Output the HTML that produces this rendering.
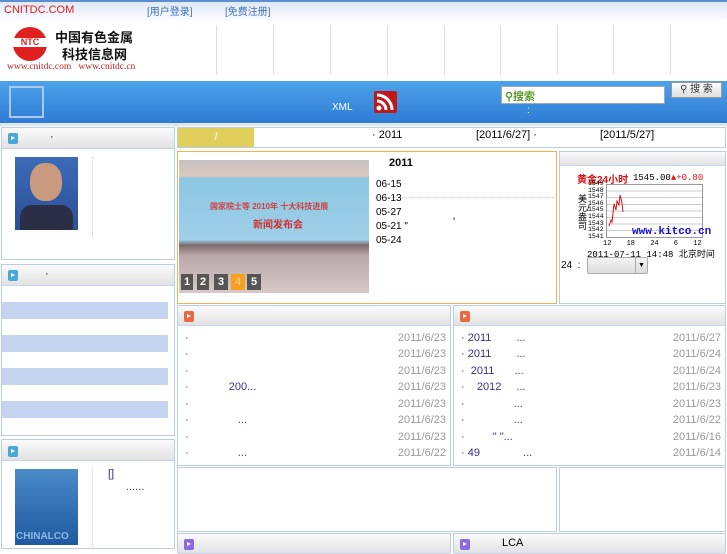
<!DOCTYPE html>
<html><head><meta charset="utf-8"><style>
*{margin:0;padding:0;box-sizing:border-box}
body{width:727px;height:545px;overflow:hidden;background:#fff;font-family:"Liberation Sans","Noto Sans CJK SC",sans-serif;font-size:11px;position:relative}
.a{position:absolute}
.hd{position:absolute;background:linear-gradient(#fafafa,#e2e2e2);border-bottom:1px solid #c8d6ea}
.bx{position:absolute;border:1px solid #b8cde6;background:#fff}
.ic{position:absolute;width:10px;height:11px;border-radius:2px}
.ic:after{content:"";position:absolute;left:3px;top:3px;border-left:4px solid #fff;border-top:2.5px solid transparent;border-bottom:2.5px solid transparent}
.row{position:absolute;left:0;right:0;height:16px;font-size:11px}
.row .d{position:absolute;right:4px;color:#999}
.row .t{position:absolute;left:7px;color:#33338a}
.vl{position:absolute;top:25px;width:1px;height:50px;background:#ddd}
</style></head><body>
<div class="a" style="left:0;top:0;width:727px;height:22px;background:linear-gradient(#dbe6f3,#fff)"></div>
<div class="a" style="left:0;top:0;width:727px;height:2px;background:#5b8fd0"></div>
<div class="a" style="left:4px;top:4px;color:#e02020;font-size:11px">CNITDC.COM</div>
<div class="a" style="left:147px;top:3px;color:#3a6fc4;font-size:10px">[用户登录]</div>
<div class="a" style="left:225px;top:3px;color:#3a6fc4;font-size:10px">[免费注册]</div>
<div class="a" style="left:13px;top:27px;width:34px;height:34px;border-radius:50%;background:#e02020"></div>
<div class="a" style="left:12px;top:38px;width:36px;height:9px;background:#fff;color:#e02020;font-size:9px;font-weight:bold;text-align:center;line-height:9px">NTC</div>
<div class="a" style="left:55px;top:27px;font-size:13px;font-weight:bold;color:#111">中国有色金属</div>
<div class="a" style="left:62px;top:44px;font-size:13px;font-weight:bold;color:#111">科技信息网</div>
<div class="a" style="left:7px;top:62px;font-size:9.5px;color:#c02020;font-family:'Liberation Serif',serif">www.cnitdc.com &nbsp;&nbsp;www.cnitdc.cn</div>
<div class="vl" style="left:216px"></div><div class="vl" style="left:273px"></div><div class="vl" style="left:330px"></div><div class="vl" style="left:387px"></div><div class="vl" style="left:444px"></div><div class="vl" style="left:500px"></div><div class="vl" style="left:557px"></div><div class="vl" style="left:613px"></div><div class="vl" style="left:670px"></div>
<div class="a" style="left:0;top:81px;width:727px;height:42px;background:linear-gradient(#4da3ea,#2e7bd4)"></div>
<div class="a" style="left:9px;top:86px;width:35px;height:32px;border:2px solid #a8c8ec"></div>
<div class="a" style="left:332px;top:102px;color:#fff;font-size:10px">XML</div>
<div class="a" style="left:374px;top:91px;width:23px;height:22px;background:#c01818;border-radius:2px;overflow:hidden">
<svg width="23" height="22"><circle cx="5" cy="17" r="2.5" fill="#fff"/><path d="M3 10a9 9 0 0 1 9 9M3 4a15 15 0 0 1 15 15" stroke="#fff" stroke-width="3" fill="none"/></svg></div>
<div class="a" style="left:501px;top:86px;width:164px;height:18px;background:#fff;border:1px solid #9ab"></div>
<div class="a" style="left:505px;top:88px;color:#5a9a2a;font-size:11px;font-weight:bold">⚲搜索</div>
<div class="a" style="left:527px;top:105px;color:#fff;font-size:10px">:</div>
<div class="a" style="left:671px;top:82px;width:51px;height:16px;background:linear-gradient(#fff,#ddd);border:1px solid #999;font-size:10px;text-align:center;line-height:14px;color:#333">⚲ 搜 索</div>
<div class="a" style="left:0;top:123px;width:727px;height:3px;background:#dfe6ee"></div>
<div class="bx" style="left:1px;top:127px;width:174px;height:133px"></div>
<div class="hd" style="left:2px;top:128px;width:172px;height:21px"></div>
<div class="ic" style="left:8px;top:133px;background:#4aa8d8"></div>
<div class="a" style="left:50px;top:131px">·</div>
<div class="a" style="left:15px;top:157px;width:63px;height:73px;background:linear-gradient(#3d6bb8,#2a4f95)"></div>
<div class="a" style="left:30px;top:163px;width:32px;height:38px;border-radius:45%;background:#c99a7e"></div>
<div class="a" style="left:20px;top:205px;width:53px;height:25px;background:#2a2f45;border-radius:12px 12px 0 0"></div>
<div class="a" style="left:92px;top:157px;height:80px;border-left:1px dotted #ccc"></div>
<div class="bx" style="left:1px;top:264px;width:174px;height:172px"></div>
<div class="hd" style="left:2px;top:265px;width:172px;height:21px"></div>
<div class="ic" style="left:8px;top:270px;background:#4aa8d8"></div>
<div class="a" style="left:45px;top:268px">·</div>
<div class="a" style="left:2px;top:302px;width:166px;height:17px;background:#c3d3f0"></div>
<div class="a" style="left:2px;top:335px;width:166px;height:17px;background:#c3d3f0"></div>
<div class="a" style="left:2px;top:368px;width:166px;height:17px;background:#c3d3f0"></div>
<div class="a" style="left:2px;top:401px;width:166px;height:17px;background:#c3d3f0"></div>
<div class="bx" style="left:1px;top:439px;width:174px;height:110px"></div>
<div class="hd" style="left:2px;top:440px;width:172px;height:21px"></div>
<div class="ic" style="left:8px;top:446px;background:#4aa8d8"></div>
<div class="a" style="left:15px;top:469px;width:63px;height:76px;background:linear-gradient(#4a8ac8,#1f5aa0)"></div>
<div class="a" style="left:16px;top:531px;color:#8ab8e8;font-size:10px;font-weight:bold">CHINALCO</div>
<div class="a" style="left:92px;top:469px;height:80px;border-left:1px dotted #ccc"></div>
<div class="a" style="left:108px;top:468px;color:#33338a">[]</div>
<div class="a" style="left:126px;top:481px;color:#33338a">......</div>
<div class="bx" style="left:177px;top:127px;width:549px;height:21px"></div>
<div class="a" style="left:178px;top:128px;width:76px;height:19px;background:#e0cf5a;color:#fff;text-align:center;line-height:18px">/</div>
<div class="a" style="left:372px;top:129px;font-size:11px">· 2011</div>
<div class="a" style="left:476px;top:129px;font-size:11px">[2011/6/27] ·</div>
<div class="a" style="left:600px;top:129px;font-size:11px">[2011/5/27]</div>
<div class="a" style="left:177px;top:151px;width:380px;height:153px;border:1px solid #f5b050"></div>
<div class="a" style="left:179px;top:160px;width:190px;height:133px;background:linear-gradient(#c8c2c0 0%,#d9c8c0 12%,#8cc6e0 14%,#9fd0ea 60%,#7a6a6a 64%,#b8a8a8 72%,#d8c8c8 100%)"></div>
<div class="a" style="left:210px;top:201px;color:#d04040;font-size:8px;font-weight:bold">国家院士等 2010年 十大科技进展</div>
<div class="a" style="left:253px;top:216px;color:#d03030;font-size:10px;font-weight:bold">新闻发布会</div>
<div class="a" style="left:181px;top:274px;width:12px;height:16px;background:#555;color:#fff;text-align:center;line-height:16px;font-weight:bold">1</div>
<div class="a" style="left:197px;top:274px;width:12px;height:16px;background:#555;color:#fff;text-align:center;line-height:16px;font-weight:bold">2</div>
<div class="a" style="left:214px;top:274px;width:14px;height:16px;background:#555;color:#fff;text-align:center;line-height:16px;font-weight:bold">3</div>
<div class="a" style="left:231px;top:274px;width:14px;height:16px;background:#f5a020;color:#fc8;text-align:center;line-height:16px">4</div>
<div class="a" style="left:247px;top:274px;width:14px;height:16px;background:#555;color:#fff;text-align:center;line-height:16px;font-weight:bold">5</div>
<div class="a" style="left:389px;top:157px;font-size:11px;font-weight:bold">2011</div>
<div class="a" style="left:375px;top:197px;width:180px;border-top:1px dotted #ccc"></div>
<div class="a" style="left:376px;top:178px;font-size:10px;line-height:14px">06-15<br>06-13<br>05-27<br>05-21 "<br>05-24</div>
<div class="a" style="left:453px;top:216px">'</div>
<div class="bx" style="left:559px;top:151px;width:167px;height:153px"></div>
<div class="hd" style="left:560px;top:152px;width:165px;height:14px"></div>
<div class="a" style="left:577px;top:171px;color:#e01010;font-size:10px;font-weight:bold">黄金24小时</div>
<div class="a" style="left:633px;top:173px;font-size:9px;font-family:'Liberation Mono',monospace">1545.00<span style="color:#e01010">▲+0.80</span></div>
<div class="a" style="left:578px;top:195px;font-size:9px;line-height:9px;width:8px">美元/盎司</div>
<div class="a" style="left:588px;top:181px;font-size:6.5px;line-height:6.6px;font-family:'Liberation Mono',monospace">1549<br>1548<br>1547<br>1546<br>1545<br>1544<br>1543<br>1542<br>1541</div>
<div class="a" style="left:606px;top:184px;width:97px;height:54px;border:1px solid #999;background:repeating-linear-gradient(#fff 0 5.6px,#ccc 5.6px 6.6px)"></div>
<svg class="a" style="left:606px;top:184px" width="97" height="54"><path d="M3 42 L5 36 L6 38 L8 20 L10 26 L11 17 L13 21 L14 11 L16 19 L17 28" stroke="#e01010" fill="none"/></svg>
<div class="a" style="left:632px;top:226px;color:#1010e0;font-size:11px;font-weight:bold;font-family:'Liberation Mono',monospace">www.kitco.cn</div>
<div class="a" style="left:603px;top:240px;font-size:7px;font-family:'Liberation Mono',monospace;word-spacing:11px">12 18 24 6 12</div>
<div class="a" style="left:587px;top:247px;font-size:9px;font-family:'Liberation Mono',monospace">2011-07-11 14:48 北京时间</div>
<div class="a" style="left:561px;top:260px;font-size:10px">24 &nbsp;:</div>
<div class="a" style="left:587px;top:257px;width:61px;height:17px;border:1px solid #aaa;background:linear-gradient(#f4f4f4,#ddd);border-radius:2px"></div>
<div class="a" style="left:635px;top:258px;width:12px;height:15px;border-left:1px solid #aaa;font-size:7px;text-align:center;line-height:15px">▼</div>
<div class="bx" style="left:177px;top:305px;width:274px;height:161px">
<div class="hd" style="left:0;top:0;width:272px;height:20px"></div>
<div class="ic" style="left:6px;top:5px;background:#e86a40"></div>
<div class="row" style="top:26px"><span class="t">·</span><span class="d">2011/6/23</span></div>
<div class="row" style="top:42px"><span class="t">·</span><span class="d">2011/6/23</span></div>
<div class="row" style="top:59px"><span class="t">·</span><span class="d">2011/6/23</span></div>
<div class="row" style="top:75px"><span class="t">· <span style="margin-left:37px">200...</span></span><span class="d">2011/6/23</span></div>
<div class="row" style="top:92px"><span class="t">·</span><span class="d">2011/6/23</span></div>
<div class="row" style="top:108px"><span class="t">· <span style="margin-left:46px">...</span></span><span class="d">2011/6/23</span></div>
<div class="row" style="top:125px"><span class="t">·</span><span class="d">2011/6/23</span></div>
<div class="row" style="top:141px"><span class="t">· <span style="margin-left:46px">...</span></span><span class="d">2011/6/22</span></div>
</div>
<div class="bx" style="left:453px;top:305px;width:273px;height:161px">
<div class="hd" style="left:0;top:0;width:271px;height:20px"></div>
<div class="ic" style="left:6px;top:5px;background:#e86a40"></div>
<div class="row" style="top:26px"><span class="t">· 2011 <span style="margin-left:22px">...</span></span><span class="d">2011/6/27</span></div>
<div class="row" style="top:42px"><span class="t">· 2011 <span style="margin-left:22px">...</span></span><span class="d">2011/6/24</span></div>
<div class="row" style="top:59px"><span class="t">· &nbsp;2011 <span style="margin-left:17px">...</span></span><span class="d">2011/6/24</span></div>
<div class="row" style="top:75px"><span class="t">· &nbsp;&nbsp;&nbsp;2012 <span style="margin-left:12px">...</span></span><span class="d">2011/6/23</span></div>
<div class="row" style="top:92px"><span class="t">· <span style="margin-left:46px">...</span></span><span class="d">2011/6/23</span></div>
<div class="row" style="top:108px"><span class="t">· <span style="margin-left:46px">...</span></span><span class="d">2011/6/22</span></div>
<div class="row" style="top:125px"><span class="t">· <span style="margin-left:25px">" "...</span></span><span class="d">2011/6/16</span></div>
<div class="row" style="top:141px"><span class="t">· 49 <span style="margin-left:40px">...</span></span><span class="d">2011/6/14</span></div>
</div>
<div class="bx" style="left:177px;top:467px;width:380px;height:65px"></div>
<div class="bx" style="left:559px;top:467px;width:167px;height:65px"></div>
<div class="bx" style="left:177px;top:533px;width:274px;height:20px"><div class="hd" style="left:0;top:0;width:272px;height:20px"></div><div class="ic" style="left:6px;top:5px;background:#8a6ae0"></div></div>
<div class="bx" style="left:453px;top:533px;width:273px;height:20px"><div class="hd" style="left:0;top:0;width:271px;height:20px"></div><div class="ic" style="left:6px;top:5px;background:#8a6ae0"></div><div class="a" style="left:48px;top:3px;font-size:11px">LCA</div></div>
</body></html>
